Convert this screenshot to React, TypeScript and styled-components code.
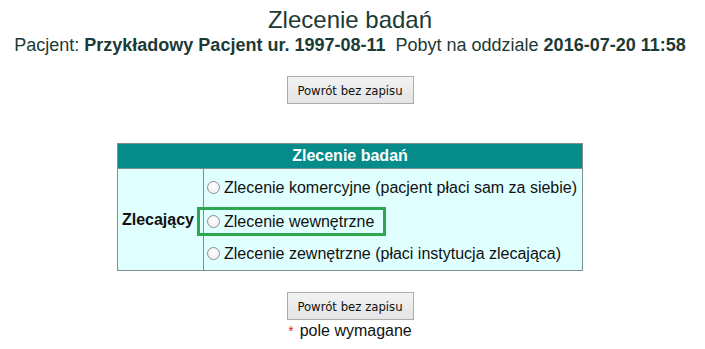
import React from "react";
import styled, { createGlobalStyle } from "styled-components";

const GlobalStyle = createGlobalStyle`
  html, body {
    margin: 0;
    padding: 0;
    background: #ffffff;
  }
  body {
    font-family: "Liberation Sans", Arial, sans-serif;
  }
`;

const Page = styled.div`
  width: 700px;
  display: flex;
  flex-direction: column;
  align-items: center;
  padding-top: 6px;
`;

const Title = styled.h1`
  margin: 0;
  font-size: 24px;
  line-height: 28px;
  font-weight: normal;
  color: #1c3a35;
`;

const PatientLine = styled.div`
  margin-top: 1px;
  font-size: 18px;
  line-height: 20px;
  color: #1c3a35;
  white-space: pre;

  b {
    font-weight: bold;
  }
`;

const Button = styled.button<{ $top: number }>`
  margin-top: ${(p) => p.$top}px;
  width: 127px;
  height: 28px;
  padding: 0;
  font-family: "DejaVu Sans Condensed", "DejaVu Sans", sans-serif;
  font-size: 13px;
  color: #111;
  background: linear-gradient(#f2f2f2, #e4e4e4);
  border: 1px solid #acacac;
  border-radius: 0;
  cursor: pointer;
`;

const Table = styled.table`
  margin-top: 39px;
  width: 466px;
  border-collapse: collapse;
  table-layout: fixed;
  font-size: 16px;
`;

const LabelCol = styled.col`
  width: 86px;
`;

const HeadCell = styled.th`
  height: 24px;
  padding: 0;
  background: #058b8a;
  color: #ffffff;
  font-weight: bold;
  font-size: 16px;
  text-align: center;
  border: 1px solid #7f8f8f;
`;

const LabelCell = styled.td`
  padding: 0 9px 0 0;
  background: #e0ffff;
  border: 1px solid #7f8f8f;
  text-align: right;
  font-weight: bold;
  color: #111;
`;

const OptionsCell = styled.td`
  padding: 2px 0 0 0;
  background: #e0ffff;
  border: 1px solid #7f8f8f;
`;

const Options = styled.div`
  display: flex;
  flex-direction: column;
  align-items: flex-start;
`;

const Option = styled.label<{ $marked?: boolean }>`
  display: inline-flex;
  align-items: center;
  gap: 4px;
  height: 33px;
  padding: 0 9px 0 3px;
  color: #111;
  white-space: nowrap;
  cursor: pointer;
  ${(p) =>
    p.$marked &&
    `
    height: 23px;
    margin: 6px 0 4px -4px;
    padding-left: 7px;
    outline: 3px solid #2ea84f;
  `}
`;

const Radio = styled.span`
  width: 11px;
  height: 11px;
  border-radius: 50%;
  border: 1px solid #8e8e8e;
  background: radial-gradient(circle at 50% 40%, #ffffff, #ececec);
  flex-shrink: 0;
`;

const Note = styled.div`
  margin-top: 1px;
  font-size: 16px;
  line-height: 20px;
  color: #111;
`;

const Star = styled.span`
  color: #e0232b;
  font-size: 14px;
  margin-right: 6px;
`;

const options = [
  { text: "Zlecenie komercyjne (pacjent płaci sam za siebie)" },
  { text: "Zlecenie wewnętrzne", marked: true },
  { text: "Zlecenie zewnętrzne (płaci instytucja zlecająca)" },
];

export default function App() {
  return (
    <>
      <GlobalStyle />
      <Page>
        <Title>Zlecenie badań</Title>
        <PatientLine>
          Pacjent: <b>Przykładowy Pacjent ur. 1997-08-11</b>
          {"  "}Pobyt na oddziale <b>2016-07-20 11:58</b>
        </PatientLine>
        <Button $top={21}>Powrót bez zapisu</Button>
        <Table>
          <colgroup>
            <LabelCol />
            <col />
          </colgroup>
          <thead>
            <tr>
              <HeadCell colSpan={2}>Zlecenie badań</HeadCell>
            </tr>
          </thead>
          <tbody>
            <tr>
              <LabelCell>Zlecający</LabelCell>
              <OptionsCell>
                <Options>
                  {options.map((o) => (
                    <Option key={o.text} $marked={o.marked}>
                      <Radio />
                      {o.text}
                    </Option>
                  ))}
                </Options>
              </OptionsCell>
            </tr>
          </tbody>
        </Table>
        <Button $top={21}>Powrót bez zapisu</Button>
        <Note>
          <Star>*</Star>pole wymagane
        </Note>
      </Page>
    </>
  );
}
